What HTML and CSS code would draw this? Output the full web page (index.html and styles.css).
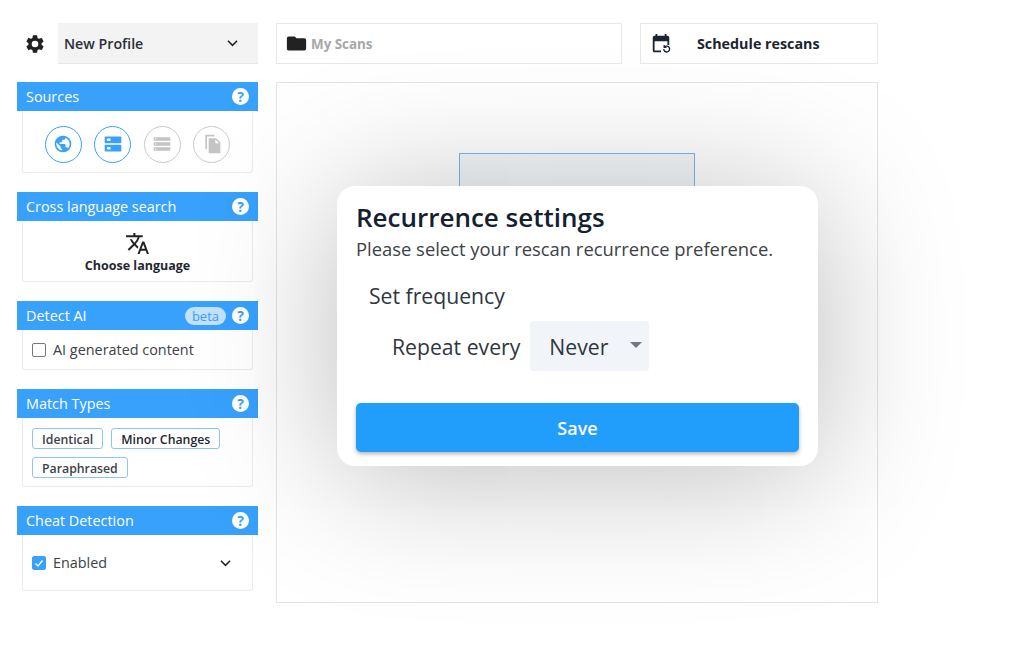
FILE: index.html
```html
<!DOCTYPE html>
<html lang="en">
<head>
  <meta charset="UTF-8" />
  <title>Recurrence settings</title>
  <link rel="stylesheet" href="styles.css">
</head>
<body>
  <div class="app">
    <aside class="sidebar">
      <div class="profile-row">
        <svg class="gear" viewBox="0 0 24 24"><path d="M19.14 12.94c.04-.3.06-.61.06-.94s-.02-.64-.07-.94l2.03-1.58a.49.49 0 0 0 .12-.61l-1.92-3.32a.49.49 0 0 0-.59-.22l-2.39.96a7 7 0 0 0-1.62-.94l-.36-2.54a.48.48 0 0 0-.48-.41h-3.84a.48.48 0 0 0-.47.41l-.36 2.54c-.59.24-1.13.57-1.62.94l-2.39-.96a.48.48 0 0 0-.59.22L2.74 8.87a.48.48 0 0 0 .12.61l2.03 1.58c-.05.3-.09.63-.09.94s.02.64.07.94l-2.03 1.58a.49.49 0 0 0-.12.61l1.92 3.32c.12.22.37.29.59.22l2.39-.96c.5.38 1.03.7 1.62.94l.36 2.54c.05.24.24.41.48.41h3.84c.24 0 .44-.17.47-.41l.36-2.54c.59-.24 1.13-.56 1.62-.94l2.39.96c.22.08.47 0 .59-.22l1.92-3.32a.48.48 0 0 0-.12-.61l-2.01-1.58zM12 15.6a3.6 3.6 0 1 1 0-7.2 3.6 3.6 0 0 1 0 7.2z"/></svg>
        <div class="profile-select">
          <span>New Profile</span>
          <svg class="chevron" viewBox="0 0 12 8"><path d="M1 1.5l5 5 5-5"/></svg>
        </div>
      </div>

      <section class="group">
        <header class="group-head"><span>Sources</span><span class="help">?</span></header>
        <div class="group-body sources">
          <span class="source on">
            <svg viewBox="0 0 24 24"><path d="M12 2a10 10 0 1 0 0 20 10 10 0 0 0 0-20zm-1 17.9A8 8 0 0 1 4.2 10.2L9 15v1a2 2 0 0 0 2 2v1.9zm6.9-2.5A2 2 0 0 0 16 16h-1v-3a1 1 0 0 0-1-1H8v-2h2a1 1 0 0 0 1-1V7h2a2 2 0 0 0 2-2v-.4a8 8 0 0 1 2.9 12.8z"/></svg>
          </span>
          <span class="source on">
            <svg viewBox="0 0 24 24"><path d="M3 3h18a1 1 0 0 1 1 1v6a1 1 0 0 1-1 1H3a1 1 0 0 1-1-1V4a1 1 0 0 1 1-1zm0 10h18a1 1 0 0 1 1 1v6a1 1 0 0 1-1 1H3a1 1 0 0 1-1-1v-6a1 1 0 0 1 1-1zm3-7.5a1.5 1.5 0 1 0 0 3h3v-3H6zm0 10a1.5 1.5 0 1 0 0 3h3v-3H6z"/></svg>
          </span>
          <span class="source">
            <svg viewBox="0 0 24 24"><path d="M2 4h20v4H2V4zm0 6h20v4H2v-4zm0 6h20v4H2v-4zm2-11v2h1V5H4zm0 6v2h1v-2H4zm0 6v2h1v-2H4z" fill-rule="evenodd"/></svg>
          </span>
          <span class="source">
            <svg viewBox="0 0 24 24"><path d="M4 1h11v2H6v15H4V1zm4 4h9l5 5v13H8V5zm8 1.5V11h4.5L16 6.5z"/></svg>
          </span>
        </div>
      </section>

      <section class="group">
        <header class="group-head"><span>Cross language search</span><span class="help">?</span></header>
        <div class="group-body language">
          <svg viewBox="0 0 24 24"><path d="M12.87 15.07l-2.54-2.51.03-.03A17.5 17.5 0 0 0 14.07 6H17V4h-7V2H8v2H1v2h11.17C11.5 7.92 10.44 9.75 9 11.35 8.07 10.32 7.3 9.19 6.69 8h-2c.73 1.63 1.73 3.17 2.98 4.56l-5.09 5.02L4 19l5-5 3.11 3.11.76-2.04zM18.5 10h-2L12 22h2l1.12-3h4.75L21 22h2l-4.5-12zm-2.62 7l1.62-4.33L19.12 17h-3.24z"/></svg>
          <span>Choose language</span>
        </div>
      </section>

      <section class="group">
        <header class="group-head"><span>Detect AI</span><span class="beta">beta</span><span class="help">?</span></header>
        <div class="group-body check-row">
          <span class="box"></span><span>AI generated content</span>
        </div>
      </section>

      <section class="group">
        <header class="group-head"><span>Match Types</span><span class="help">?</span></header>
        <div class="group-body chips">
          <span class="chip">Identical</span>
          <span class="chip dark">Minor Changes</span>
          <span class="chip">Paraphrased</span>
        </div>
      </section>

      <section class="group">
        <header class="group-head"><span>Cheat Detection</span><span class="help">?</span></header>
        <div class="group-body check-row cheat">
          <span class="box checked">
            <svg viewBox="0 0 12 12"><path d="M2.5 6.5l2.5 2.5 4.5-5.5"/></svg>
          </span>
          <span>Enabled</span>
          <svg class="chevron" viewBox="0 0 12 8"><path d="M1 1.5l5 5 5-5"/></svg>
        </div>
      </section>
    </aside>

    <main class="main">
      <div class="top-row">
        <div class="scans">
          <svg viewBox="0 0 24 24"><path d="M10 4H3a2 2 0 0 0-2 2v12a2 2 0 0 0 2 2h18a2 2 0 0 0 2-2V8a2 2 0 0 0-2-2h-9l-2-2z"/></svg>
          <span>My Scans</span>
        </div>
        <div class="schedule">
          <svg viewBox="0 0 24 24"><path d="M6 1h2v2h8V1h2v2h1a2 2 0 0 1 2 2v8h-2V9H5v10h7v2H5a2 2 0 0 1-2-2V5a2 2 0 0 1 2-2h1V1z"/><path class="refresh" d="M15 17.5a3.2 3.2 0 1 0 1-2.3M15.5 13v2.5H18"/></svg>
          <span>Schedule rescans</span>
        </div>
      </div>
      <div class="results">
        <div class="placeholder"></div>
      </div>
    </main>

    <div class="modal">
      <h2>Recurrence settings</h2>
      <p class="sub">Please select your rescan recurrence preference.</p>
      <h3>Set frequency</h3>
      <div class="repeat">
        <span>Repeat every</span>
        <div class="never"><span>Never</span><i class="caret"></i></div>
      </div>
      <button class="save">Save</button>
    </div>
  </div>
</body>
</html>
```

FILE: styles.css
```css
html, body {
  margin: 0;
  height: 100%;
  background: #fff;
  overflow: hidden;
}
body {
  font-family: "Open Sans", "Noto Sans", sans-serif;
  color: #1f2733;
}
.app {
  display: flex;
  gap: 18px;
  padding: 23px 0 0 17px;
  position: relative;
  height: 649px;
}
.sidebar {
  width: 241px;
  display: flex;
  flex-direction: column;
  gap: 19px;
}
.profile-row {
  display: flex;
  align-items: center;
  height: 41px;
  margin-bottom: -1px;
}
.gear {
  width: 22px;
  height: 22px;
  margin: 0 12px 0 7px;
  fill: #222;
  flex: none;
}
.profile-select {
  flex: 1;
  height: 40px;
  background: #f3f3f4;
  border-bottom: 1px solid #e6e7e9;
  display: flex;
  align-items: center;
  justify-content: space-between;
  padding: 0 20px 0 6px;
  font-size: 14.2px;
  font-weight: 600;
  color: #2b2f36;
}
.chevron {
  width: 11px;
  height: 8px;
  fill: none;
  stroke: #222;
  stroke-width: 1.7;
}
.group-head {
  height: 29px;
  background: #37a1fc;
  color: #fff;
  font-size: 14.4px;
  display: flex;
  align-items: center;
  padding: 0 9px;
}
.group-head > span:first-child {
  flex: 1;
}
.help {
  width: 17px;
  height: 17px;
  border-radius: 50%;
  background: #fff;
  color: #37a1fc;
  font-size: 14px;
  font-weight: 700;
  line-height: 17px;
  text-align: center;
}
.beta {
  background: #c5e2fd;
  color: #37a1fc;
  font-size: 13px;
  line-height: 18px;
  border-radius: 9px;
  padding: 0 7px;
  margin-right: 6px;
}
.group-body {
  margin: 0 5px;
  background: #fff;
  border: 1px solid #e9ebee;
  border-top: 0;
  border-radius: 0 0 3px 3px;
}
.sources {
  height: 62px;
  box-sizing: border-box;
  display: flex;
  align-items: center;
  justify-content: center;
  gap: 12.5px;
  padding: 5px 0 0 0;
}
.source {
  width: 35px;
  height: 35px;
  border-radius: 50%;
  border: 1px solid #c9c9c9;
  display: flex;
  align-items: center;
  justify-content: center;
}
.source svg {
  width: 20px;
  height: 20px;
  fill: #c4c4c4;
}
.source.on {
  border-color: #37a1fc;
}
.source.on svg {
  fill: #37a1fc;
}
.language {
  height: 58px;
  padding-top: 2px;
  display: flex;
  flex-direction: column;
  align-items: center;
  justify-content: center;
  font-size: 12.5px;
  font-weight: 700;
  color: #1f2733;
}
.language svg {
  width: 25px;
  height: 25px;
  fill: #222;
  margin-bottom: 1px;
}
.check-row {
  height: 39px;
  display: flex;
  align-items: center;
  gap: 7px;
  padding-left: 9px;
  font-size: 14.4px;
  color: #3d4148;
}
.box {
  width: 12px;
  height: 12px;
  border: 1.5px solid #777;
  border-radius: 2px;
  flex: none;
}
.box.checked {
  background: #37a1fc;
  border-color: #37a1fc;
  display: flex;
}
.box.checked svg {
  fill: none;
  stroke: #fff;
  stroke-width: 1.3;
}
.cheat {
  height: 55px;
}
.cheat .chevron {
  margin-left: auto;
  margin-right: 21px;
}
.chips {
  height: 69px;
  padding: 10px 9px 0;
  box-sizing: border-box;
  display: flex;
  flex-wrap: wrap;
  align-content: flex-start;
  gap: 8px 8px;
}
.chip {
  height: 19px;
  line-height: 21px;
  border: 1px solid #8cc5f8;
  border-radius: 3px;
  padding: 0 9px;
  font-size: 12.3px;
  font-weight: 600;
  color: #3d4148;
}
.chip.dark {
  color: #1f2733;
}
.main {
  width: 602px;
  display: flex;
  flex-direction: column;
  gap: 18px;
}
.top-row {
  display: flex;
  gap: 18px;
  height: 41px;
}
.scans, .schedule {
  border: 1px solid #e6e8ea;
  box-sizing: border-box;
  display: flex;
  align-items: center;
  font-size: 13.4px;
  font-weight: 700;
}
.scans {
  width: 346px;
  padding-left: 9px;
  gap: 4px;
  color: #a5a7aa;
}
.scans svg {
  width: 21px;
  height: 21px;
  fill: #222;
}
.schedule {
  flex: 1;
  padding-left: 9px;
  gap: 25px;
  font-size: 14.3px;
  color: #1b2431;
}
.schedule svg {
  width: 22px;
  height: 22px;
  fill: #1b2431;
}
.schedule .refresh {
  fill: none;
  stroke: #1b2431;
  stroke-width: 1.5;
}
.results {
  height: 521px;
  border: 1px solid #e1e4e7;
  box-sizing: border-box;
  padding: 70px 0 0 182px;
}
.placeholder {
  width: 236px;
  height: 100px;
  border: 1px solid #7db8ec;
  box-sizing: border-box;
  background: #f4f8fb;
}
.modal {
  position: absolute;
  left: 337px;
  top: 186px;
  width: 481px;
  height: 280px;
  box-sizing: border-box;
  padding: 16px 19px 0;
  background: #fff;
  border-radius: 18px;
  box-shadow: 0 10px 140px rgba(0, 0, 0, 0.27);
}
.modal h2 {
  margin: 0;
  font-size: 26px;
  line-height: 31px;
  font-weight: 600;
  color: #14202f;
}
.sub {
  margin: 0;
  font-size: 18.4px;
  line-height: 32px;
  color: #3d4148;
}
.modal h3 {
  margin: 17px 0 0 13px;
  font-size: 21.2px;
  line-height: 28px;
  font-weight: 400;
  color: #30363e;
}
.repeat {
  display: flex;
  align-items: center;
  gap: 10px;
  margin: 11px 0 0 36px;
  font-size: 21.2px;
  color: #30363e;
}
.never {
  width: 119px;
  height: 50px;
  background: #f1f5f9;
  border-radius: 4px;
  display: flex;
  align-items: center;
  justify-content: space-between;
  padding: 0 7px 0 19px;
  box-sizing: border-box;
}
.caret {
  width: 0;
  height: 0;
  border: 6px solid transparent;
  border-top: 6px solid #73777d;
  border-bottom: 0;
  margin-bottom: 2px;
}
.save {
  display: block;
  width: 443px;
  height: 49px;
  margin-top: 32px;
  border: 0;
  border-radius: 5px;
  background: #219efc;
  color: #fff;
  font-family: inherit;
  font-size: 18px;
  font-weight: 600;
  box-shadow: 0 2px 4px rgba(0, 0, 0, 0.3);
}
```
